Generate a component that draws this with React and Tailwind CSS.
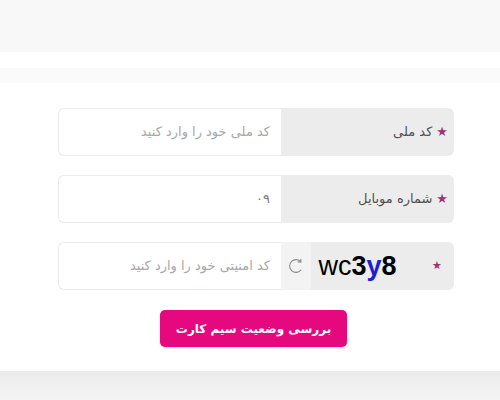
import React from "react";

const Star = () => <span className="text-[#a0336f] text-[13px] ml-1">★</span>;

const Field = ({ label, placeholder, value }) => (
  <div className="flex h-[48px] w-[396px] rounded-md" dir="rtl">
    <div className="w-[173px] h-full bg-[#ececec] rounded-r-md flex items-center pr-[6px] text-[13px] text-[#505050]">
      <Star />
      <span>{label}</span>
    </div>
    <div className="flex-1 h-full bg-white border border-[#ebebeb] border-r-0 rounded-l-md flex items-center pr-[11px] text-[13px]">
      {value ? (
        <span className="text-[#7a7a7a]">{value}</span>
      ) : (
        <span className="text-[#a8a8a8]">{placeholder}</span>
      )}
    </div>
  </div>
);

const Captcha = () => (
  <div className="flex h-[48px] w-[396px] rounded-md" dir="rtl">
    <div className="w-[173px] h-full bg-[#ececec] rounded-r-md flex items-center">
      <div className="w-[34px] flex justify-center">
        <span className="text-[#a0336f] text-[11px]">★</span>
      </div>
      <div className="flex-1 flex justify-center pr-[16px]" dir="ltr">
        <span className="text-[27px] leading-none text-black" style={{ fontFamily: "'Liberation Sans', sans-serif" }}>
          wc<b>3</b><b className="text-[#1d1dd8]">y</b><b>8</b>
        </span>
      </div>
      <div className="w-[30px] h-full bg-[#f3f3f3] flex items-center justify-center">
        <svg width="18" height="18" viewBox="0 0 24 24" fill="none" stroke="#8a8a8a" strokeWidth="1.4" strokeLinecap="round">
          <path d="M18.5 6.5A8.5 8.5 0 1 0 18.5 17.5" />
          <path d="M18.5 3v3.5H15" />
        </svg>
      </div>
    </div>
    <div className="flex-1 h-full bg-white border border-[#ebebeb] border-r-0 rounded-l-md flex items-center pr-[11px] text-[13px]">
      <span className="text-[#a8a8a8]">کد امنیتی خود را وارد کنید</span>
    </div>
  </div>
);

export default function App() {
  return (
    <div className="w-[500px] h-[400px] bg-white overflow-hidden flex flex-col" style={{ fontFamily: "'DejaVu Sans', sans-serif" }}>
      <div className="h-[52px] bg-[#f8f8f8]" />
      <div className="h-[16px] bg-white" />
      <div className="h-[15px] bg-[#fafafa]" />
      <div className="flex-1 flex flex-col pl-[58px] pt-[25px] gap-[19px]">
        <Field label="کد ملی" placeholder="کد ملی خود را وارد کنید" />
        <Field label="شماره موبایل" value="۰۹" />
        <Captcha />
        <div className="w-[396px] flex justify-center pr-[5px] mt-[1px]">
          <button className="w-[187px] h-[37px] bg-[#e5087f] rounded-[5px] text-white text-[12px] font-bold shadow-sm" dir="rtl">
            بررسی وضعیت سیم کارت
          </button>
        </div>
      </div>
      <div className="h-[29px] bg-gradient-to-b from-[#ebebeb] to-[#f4f4f4]" />
    </div>
  );
}
